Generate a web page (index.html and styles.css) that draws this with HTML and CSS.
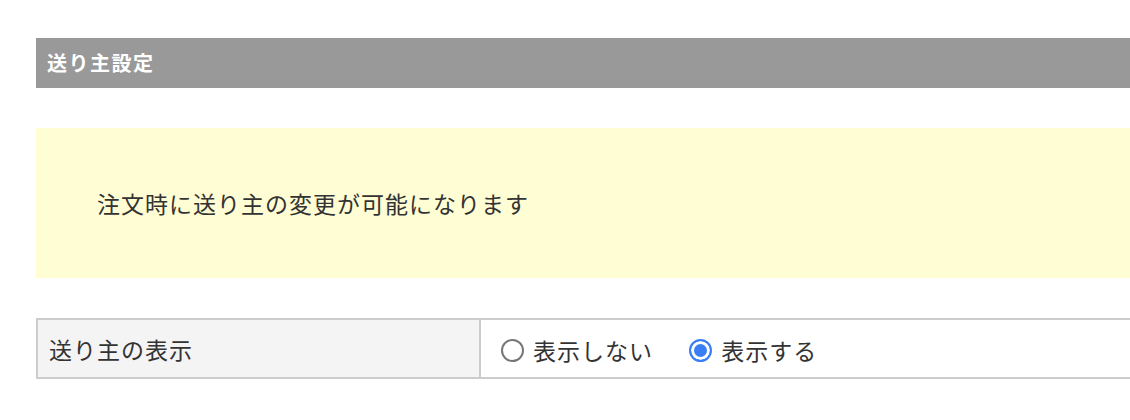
FILE: index.html
```html
<!DOCTYPE html>
<html lang="ja">
<head>
  <meta charset="UTF-8">
  <meta name="viewport" content="width=device-width, initial-scale=1.0">
  <title>送り主設定</title>
  <link rel="stylesheet" href="styles.css">
</head>
<body>
  <div class="page">
    <h2 class="section-title">送り主設定</h2>

    <!-- 説明 -->
    <div class="notice">
      <p>注文時に送り主の変更が可能になります</p>
    </div>

    <table class="settings-table">
      <tr>
        <th>送り主の表示</th>
        <td>
          <label class="radio">
            <input type="radio" name="sender" value="0">
            <span>表示しない</span>
          </label>
          <label class="radio">
            <input type="radio" name="sender" value="1" checked>
            <span>表示する</span>
          </label>
        </td>
      </tr>
    </table>
  </div>
</body>
</html>
```

FILE: styles.css
```css
html, body {
  overflow: hidden;
}

body {
  margin: 0;
  font-family: "Noto Sans CJK JP", "Noto Sans", sans-serif;
  color: #333;
  background-color: #fff;
}

.page {
  width: 1200px;
  padding: 38px 0 0 36px;
}

.section-title {
  margin: 0;
  height: 50px;
  line-height: 50px;
  padding-left: 11px;
  background-color: #999;
  color: #fff;
  font-size: 20px;
  font-weight: bold;
  letter-spacing: 1.5px;
}

.notice {
  margin-top: 40px;
  height: 150px;
  display: flex;
  align-items: center;
  padding-left: 61px;
  background-color: #fffdd3;
}

.notice p {
  margin: 0;
  font-size: 23px;
  letter-spacing: 1px;
}

.settings-table {
  margin-top: 40px;
  width: 100%;
  border-collapse: collapse;
  font-size: 23px;
  letter-spacing: 1px;
}

.settings-table th, .settings-table td {
  height: 57px;
  padding: 0;
  border: 2px solid #ccc;
  text-align: left;
  font-weight: normal;
}

.settings-table th {
  width: 430px;
  padding-left: 11px;
  background-color: #f3f4f3;
}

.settings-table td {
  padding-left: 20px;
}

.radio {
  display: inline-flex;
  align-items: center;
  gap: 9px;
  margin-right: 30px;
  vertical-align: middle;
}

.radio input {
  appearance: none;
  -webkit-appearance: none;
  margin: 0;
  width: 23px;
  height: 23px;
  border: 2px solid #777;
  border-radius: 50%;
  background-color: #fff;
  box-sizing: border-box;
}

.radio input:checked {
  border: 2px solid #3a7ef6;
  background-color: #3a7ef6;
  box-shadow: inset 0 0 0 3px #fff;
}
```
